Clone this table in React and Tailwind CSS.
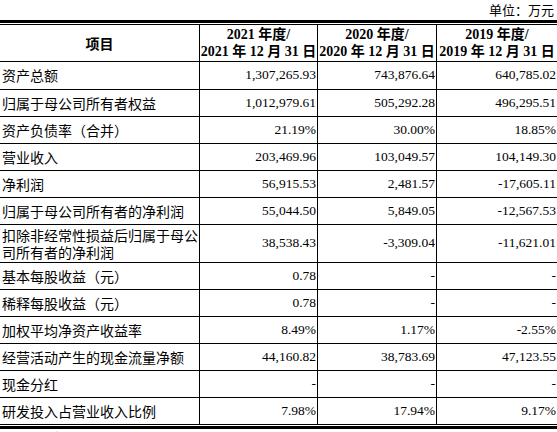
import React from "react";

const rows = [
  { label: "资产总额", v: ["1,307,265.93", "743,876.64", "640,785.02"], h: "h-[28px]" },
  { label: "归属于母公司所有者权益", v: ["1,012,979.61", "505,292.28", "496,295.51"], h: "h-[27px]" },
  { label: "资产负债率（合并）", v: ["21.19%", "30.00%", "18.85%"], h: "h-[27px]" },
  { label: "营业收入", v: ["203,469.96", "103,049.57", "104,149.30"], h: "h-[27px]" },
  { label: "净利润", v: ["56,915.53", "2,481.57", "-17,605.11"], h: "h-[27px]" },
  { label: "归属于母公司所有者的净利润", v: ["55,044.50", "5,849.05", "-12,567.53"], h: "h-[27px]" },
  { label: "扣除非经常性损益后归属于母公司所有者的净利润", v: ["38,538.43", "-3,309.04", "-11,621.01"], h: "h-[38px]" },
  { label: "基本每股收益（元）", v: ["0.78", "-", "-"], h: "h-[27px]" },
  { label: "稀释每股收益（元）", v: ["0.78", "-", "-"], h: "h-[27px]" },
  { label: "加权平均净资产收益率", v: ["8.49%", "1.17%", "-2.55%"], h: "h-[27px]" },
  { label: "经营活动产生的现金流量净额", v: ["44,160.82", "38,783.69", "47,123.55"], h: "h-[27px]" },
  { label: "现金分红", v: ["-", "-", "-"], h: "h-[27px]" },
  { label: "研发投入占营业收入比例", v: ["7.98%", "17.94%", "9.17%"], h: "h-[26px]", last: true },
];

const years = ["2021", "2020", "2019"];

const App = () => {
  return (
    <div
      className="w-[557px] h-[432px] overflow-hidden bg-white text-black"
      style={{ fontFamily: '"Liberation Serif", "Noto Sans CJK SC", serif' }}
    >
      <div className="h-[20px] text-right pr-[3px] text-[13px] leading-[20px] font-['Noto_Sans_CJK_SC',sans-serif]">
        单位：万元
      </div>
      <div className="h-[5px] border-t-[3px] border-b border-black" />

      <div className="grid grid-cols-[200px_118px_119px_120px] h-[37px] border-b border-black font-bold">
        <div className="border-r border-black flex items-center justify-center text-[14px] font-['Noto_Sans_CJK_SC',sans-serif]">
          项目
        </div>
        {years.map((y, i) => (
          <div
            key={y}
            className={`flex flex-col items-center justify-center text-[14px] leading-[17px] whitespace-nowrap ${
              i < 2 ? "border-r border-black" : ""
            }`}
          >
            <span>
              {y} 年度/
            </span>
            <span>
              {y} 年 12 月 31 日
            </span>
          </div>
        ))}
      </div>

      {rows.map((r) => (
        <div
          key={r.label}
          className={`grid grid-cols-[200px_118px_119px_120px] ${r.h} ${
            r.last ? "" : "border-b border-black"
          }`}
        >
          <div className="border-r border-black flex items-center pl-[2px] text-[14px] leading-[17px] font-['Noto_Sans_CJK_SC',sans-serif]">
            {r.label}
          </div>
          {r.v.map((val, i) => (
            <div
              key={i}
              className={`flex items-center justify-end pr-[1px] text-[13.5px] ${
                i < 2 ? "border-r border-black" : ""
              }`}
            >
              {val}
            </div>
          ))}
        </div>
      ))}

      <div className="h-[5px] border-t border-b-[3px] border-black" />
      <div className="pl-[2px] pt-[1px] text-[13px] leading-[16px] whitespace-nowrap font-['Noto_Sans_CJK_SC',sans-serif]">
        注：研发投入占营业收入比例=研发费用/营业收入，研发费用含股份支付。
      </div>
    </div>
  );
};

export default App;
